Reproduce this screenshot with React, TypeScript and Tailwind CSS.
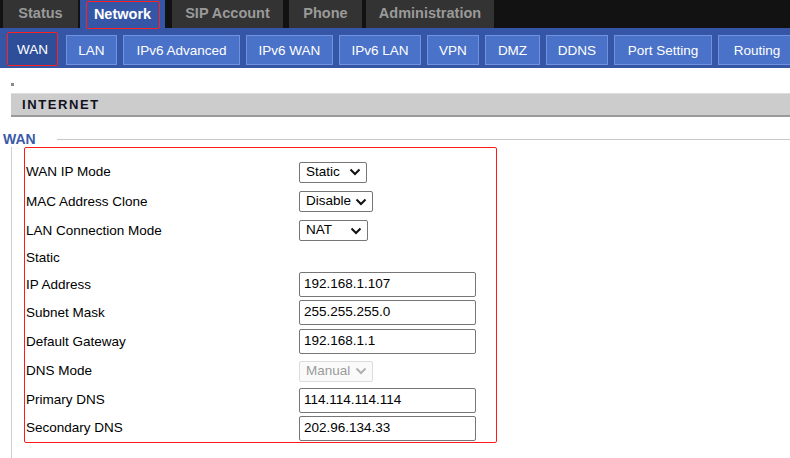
import React from 'react';

const topTabs = [
  { label: 'Status', w: 'w-[75px]', ml: 'ml-[3px]' },
  { label: 'Network', w: 'w-[85px]', ml: 'ml-[2px]', active: true },
  { label: 'SIP Account', w: 'w-[111px]', ml: 'ml-[7px]' },
  { label: 'Phone', w: 'w-[73px]', ml: 'ml-[6px]' },
  { label: 'Administration', w: 'w-[128px]', ml: 'ml-[4px]' },
];

const subTabs = [
  { label: 'WAN', w: 'w-[51px]', active: true },
  { label: 'LAN', w: 'w-[51px]' },
  { label: 'IPv6 Advanced', w: 'w-[117px]' },
  { label: 'IPv6 WAN', w: 'w-[87px]' },
  { label: 'IPv6 LAN', w: 'w-[82px]' },
  { label: 'VPN', w: 'w-[52px]' },
  { label: 'DMZ', w: 'w-[55px]' },
  { label: 'DDNS', w: 'w-[62px]' },
  { label: 'Port Setting', w: 'w-[98px]' },
  { label: 'Routing', w: 'w-[78px]' },
];

function Chevron({ disabled }: { disabled?: boolean }) {
  return (
    <svg width="12" height="8" viewBox="0 0 12 8" className="shrink-0">
      <path
        d="M1.5 1.5 L6 6 L10.5 1.5"
        fill="none"
        stroke={disabled ? '#b0b0b0' : '#111'}
        strokeWidth="2"
      />
    </svg>
  );
}

function FakeSelect({ value, w, disabled }: { value: string; w: string; disabled?: boolean }) {
  return (
    <div
      className={`${w} h-[21px] flex items-center justify-between pl-[6px] pr-[5px] rounded-[2px] border ${
        disabled ? 'border-[#dcdcdc] text-[#9a9a9a] bg-[#fafafa]' : 'border-[#767676] text-black bg-white'
      }`}
    >
      <span>{value}</span>
      <Chevron disabled={disabled} />
    </div>
  );
}

function TextBox({ value }: { value: string }) {
  return (
    <div className="w-[177px] h-[25px] flex items-center pl-[4px] border border-[#767676] rounded-[2px] text-[13.5px] text-black bg-white">
      {value}
    </div>
  );
}

const rows: { label: string; h: string; field?: React.ReactNode }[] = [
  { label: 'WAN IP Mode', h: 'h-[30px]', field: <FakeSelect value="Static" w="w-[68px]" /> },
  { label: 'MAC Address Clone', h: 'h-[29px]', field: <FakeSelect value="Disable" w="w-[74px]" /> },
  { label: 'LAN Connection Mode', h: 'h-[29px]', field: <FakeSelect value="NAT" w="w-[69px]" /> },
  { label: 'Static', h: 'h-[26px]' },
  { label: 'IP Address', h: 'h-[27px]', field: <TextBox value="192.168.1.107" /> },
  { label: 'Subnet Mask', h: 'h-[29px]', field: <TextBox value="255.255.255.0" /> },
  { label: 'Default Gateway', h: 'h-[29px]', field: <TextBox value="192.168.1.1" /> },
  { label: 'DNS Mode', h: 'h-[30px]', field: <FakeSelect value="Manual" w="w-[74px]" disabled /> },
  { label: 'Primary DNS', h: 'h-[28px]', field: <TextBox value="114.114.114.114" /> },
  { label: 'Secondary DNS', h: 'h-[28px]', field: <TextBox value="202.96.134.33" /> },
];

export default function App() {
  return (
    <div className="w-[790px] h-[458px] overflow-hidden bg-white font-['Liberation_Sans',Arial,sans-serif]">
      {/* top navigation */}
      <div className="h-[28px] bg-[#121212] flex">
        {topTabs.map((t) => (
          <div
            key={t.label}
            className={`${t.w} ${t.ml} h-full flex items-center justify-center text-[14.5px] font-bold ${
              t.active ? 'bg-[#3556a6] text-white' : 'bg-[#333333] text-[#9a9a9a]'
            }`}
          >
            {t.active ? (
              <span className="w-[74px] h-[28px] mt-[2px] flex items-center justify-center border border-[#ff2020] rounded-[2px]">
                {t.label}
              </span>
            ) : (
              t.label
            )}
          </div>
        ))}
      </div>

      {/* sub navigation */}
      <div className="h-[40px] bg-[#3556a6] flex items-center pl-[7px] gap-[6px]">
        {subTabs.map((t, i) => (
          <div
            key={t.label}
            className={`${t.w} ${i === 1 ? 'ml-[2px]' : ''} shrink-0 flex items-center justify-center text-[13.5px] text-white ${
              t.active
                ? 'h-[34px] bg-[#2e4e9a] border border-[#ff2020] rounded-[2px] mt-[2px]'
                : 'h-[30px] mt-[4px] bg-[#4a72c8] border border-[#6f93dc]'
            }`}
          >
            <span className="mt-[2px]">{t.label}</span>
          </div>
        ))}
      </div>

      {/* content */}
      <div className="pl-[11px] pt-[15px]">
        <div className="w-[3px] h-[3px] bg-[#8a8a8a]" />
      </div>
      <div className="ml-[11px] mt-[7px] h-[24px] bg-[#cccccc] border-t border-t-[#dedede] border-b-2 border-b-[#9a9a9a] flex items-center pl-[11px] text-[13px] font-bold tracking-[1.6px] text-[#111122]">
        INTERNET
      </div>

      <div className="mt-[15px] flex items-center h-[14px]">
        <span className="pl-[3px] text-[14px] font-bold text-[#3a5aa8] leading-none">WAN</span>
        <div className="ml-[21px] flex-1 h-px bg-[#c8c8c8]" />
      </div>

      <div className="ml-[11px] mt-[1px] border-l border-l-[#cfcfcf] pl-[12px] pb-[20px]">
        <div className="w-[473px] border border-[#ff1a1a] rounded-[2px] pt-[9px] text-[13.5px] text-black">
          {rows.map((r) => (
            <div key={r.label} className={`${r.h} flex items-center`}>
              <div className="w-[274px] pl-[1px] mt-[1px]">{r.label}</div>
              {r.field}
            </div>
          ))}
        </div>
      </div>
    </div>
  );
}
